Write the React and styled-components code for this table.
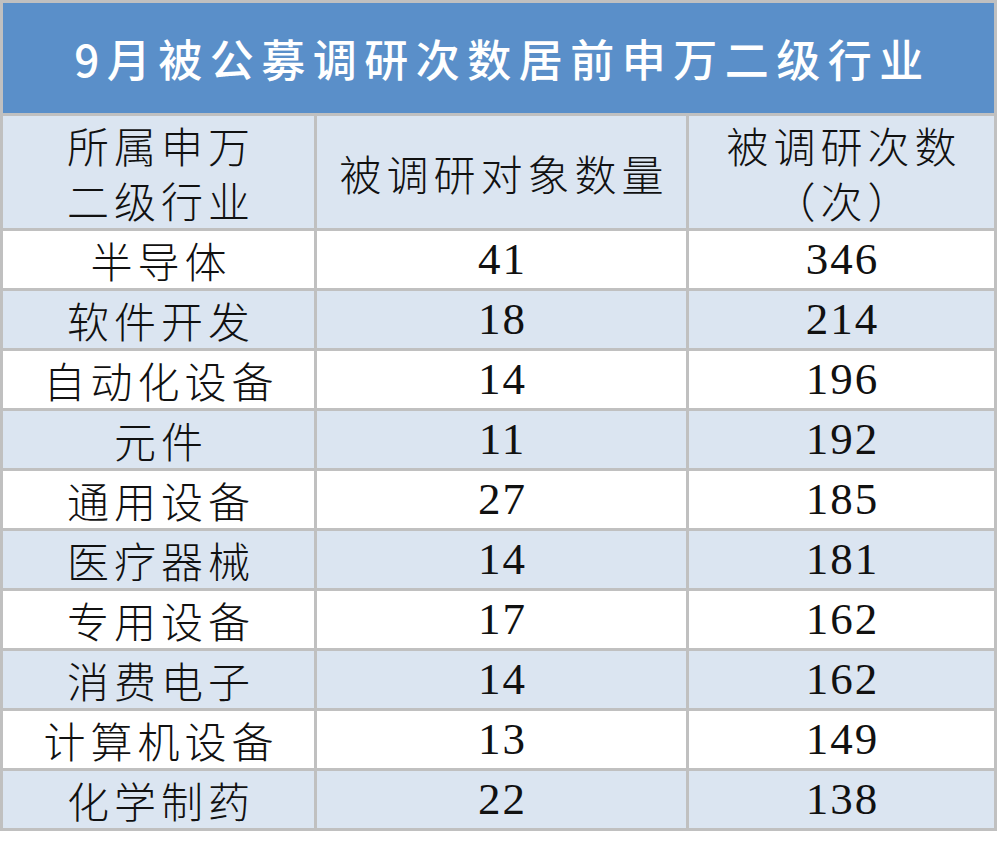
import React from 'react';
import styled, { createGlobalStyle } from 'styled-components';

const GlobalStyle = createGlobalStyle`
  html, body {
    margin: 0;
    padding: 0;
    background: #ffffff;
  }
`;

const rows = [
  { name: '半导体', count: 41, times: 346 },
  { name: '软件开发', count: 18, times: 214 },
  { name: '自动化设备', count: 14, times: 196 },
  { name: '元件', count: 11, times: 192 },
  { name: '通用设备', count: 27, times: 185 },
  { name: '医疗器械', count: 14, times: 181 },
  { name: '专用设备', count: 17, times: 162 },
  { name: '消费电子', count: 14, times: 162 },
  { name: '计算机设备', count: 13, times: 149 },
  { name: '化学制药', count: 22, times: 138 },
];

const Page = styled.div`
  width: 1000px;
  height: 842px;
  background: #ffffff;
`;

const Table = styled.div`
  width: 991px;
  display: grid;
  grid-template-columns: 311px 369px 305px;
  grid-template-rows: 110px 112px repeat(10, 57px);
  gap: 3px;
  background: #c0c0c0;
  border: 3px solid #c0c0c0;
`;

const Title = styled.div`
  grid-column: 1 / -1;
  background: #5a8fc9;
  color: #ffffff;
  display: flex;
  align-items: center;
  justify-content: center;
  font-family: 'Noto Sans CJK SC', 'Noto Sans', sans-serif;
  font-size: 44px;
  font-weight: 500;
  letter-spacing: 7.5px;
  padding-left: 8px;
`;

const Cell = styled.div`
  background: ${(p) => (p.$shade ? '#dbe5f1' : '#ffffff')};
  color: #111111;
  display: flex;
  flex-direction: column;
  align-items: center;
  justify-content: center;
  text-align: center;
  font-family: ${(p) =>
    p.$num
      ? "'Liberation Serif', 'Times New Roman', serif"
      : "'Noto Sans CJK SC', 'Noto Sans', sans-serif"};
  font-size: ${(p) => (p.$num ? '45px' : '42px')};
  font-weight: ${(p) => (p.$num ? 400 : 300)};
  letter-spacing: ${(p) => (p.$num ? '2px' : '5px')};
  padding-left: ${(p) => (p.$num ? '2px' : '5px')};
  line-height: 55px;
`;

export default function App() {
  return (
    <Page>
      <GlobalStyle />
      <Table>
        <Title>9月被公募调研次数居前申万二级行业</Title>
        <Cell $shade>
          <span>所属申万</span>
          <span>二级行业</span>
        </Cell>
        <Cell $shade>被调研对象数量</Cell>
        <Cell $shade>
          <span>被调研次数</span>
          <span>（次）</span>
        </Cell>
        {rows.map((r, i) => (
          <React.Fragment key={r.name}>
            <Cell $shade={i % 2 === 1}>{r.name}</Cell>
            <Cell $shade={i % 2 === 1} $num>{r.count}</Cell>
            <Cell $shade={i % 2 === 1} $num>{r.times}</Cell>
          </React.Fragment>
        ))}
      </Table>
    </Page>
  );
}
